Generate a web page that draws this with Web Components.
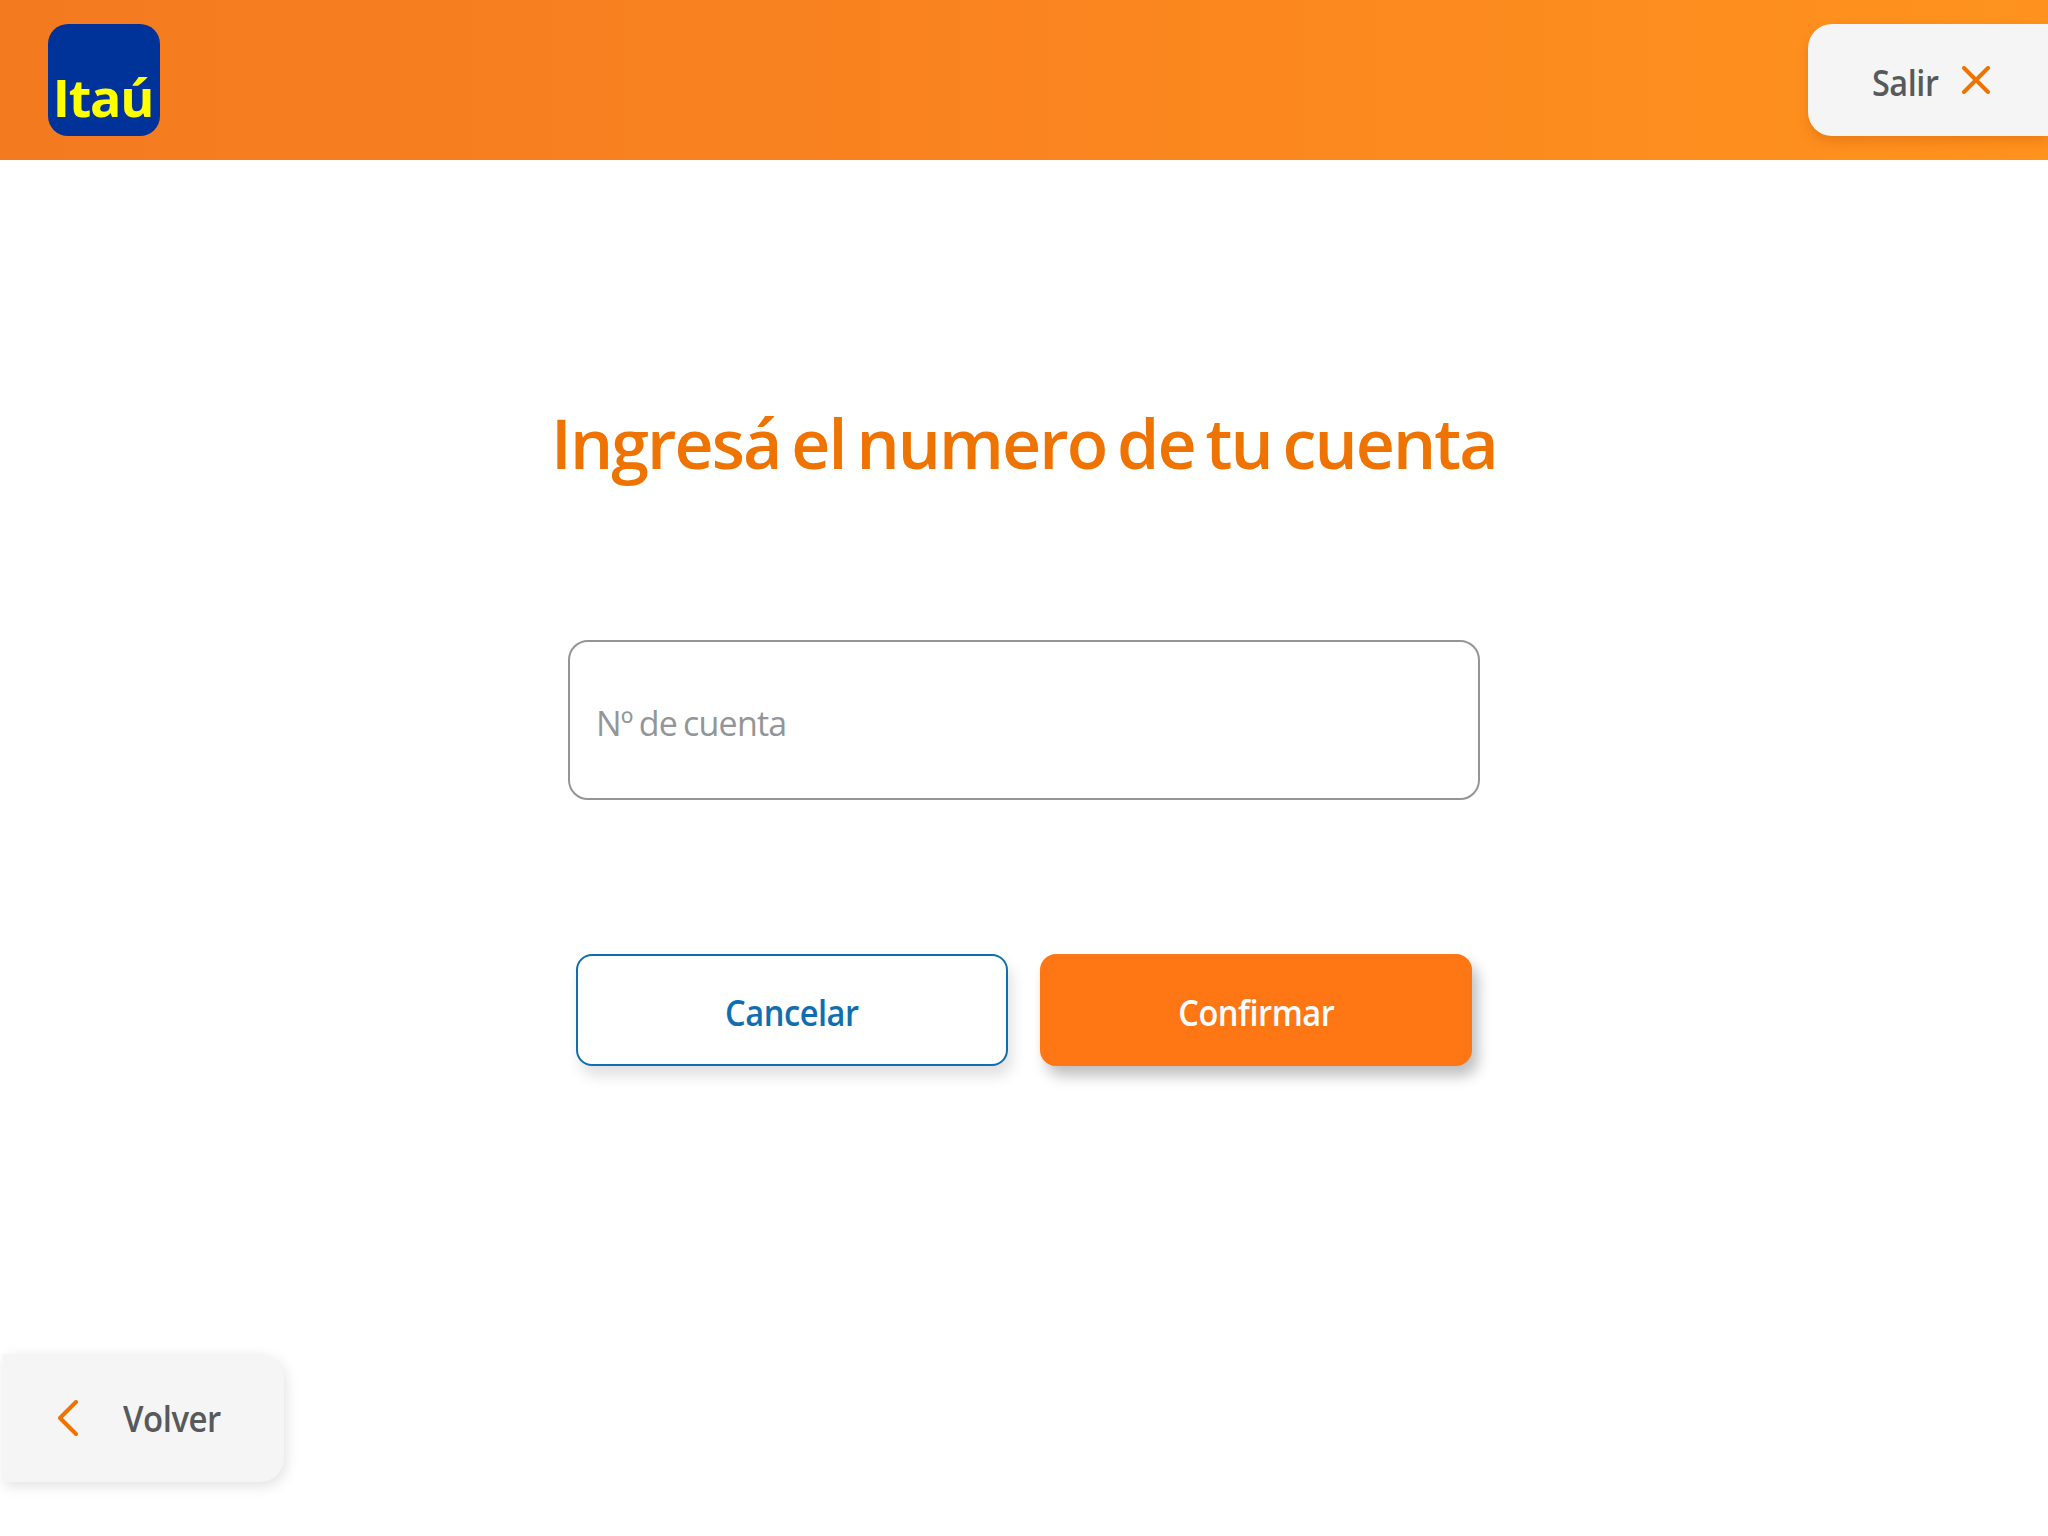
<!DOCTYPE html>
<html lang="es">
<head>
<meta charset="utf-8">
<title>Itaú</title>
<style>
  html, body { margin: 0; height: 100%; background: #fff; }
  body { font-family: "Open Sans", "Noto Sans", sans-serif; }
</style>
</head>
<body>
<account-page>
  <app-header slot="header"></app-header>
  <h-title slot="title">Ingresá el numero de tu cuenta</h-title>
  <account-input slot="field" placeholder="Nº de cuenta"></account-input>
  <action-button slot="actions" kind="outline">Cancelar</action-button>
  <action-button slot="actions" kind="solid">Confirmar</action-button>
  <back-button slot="footer">Volver</back-button>
</account-page>

<script>
class AccountPage extends HTMLElement {
  constructor() {
    super();
    this.shadowDOM = this.attachShadow({ mode: "open" });
    this.shadowDOM.innerHTML = `
      <style>
        :host { display: flex; flex-direction: column; height: 1536px; overflow: hidden; }
        main { flex: 1; display: flex; flex-direction: column; align-items: center; padding-top: 239px; }
        .field { margin-top: 153px; }
        .actions { margin-top: 154px; display: flex; gap: 32px; }
        footer { padding: 0 0 54px 3px; }
      </style>
      <slot name="header"></slot>
      <main>
        <slot name="title"></slot>
        <div class="field"><slot name="field"></slot></div>
        <div class="actions"><slot name="actions"></slot></div>
      </main>
      <footer><slot name="footer"></slot></footer>`;
  }
}

class AppHeader extends HTMLElement {
  constructor() {
    super();
    this.shadowDOM = this.attachShadow({ mode: "open" });
    this.shadowDOM.innerHTML = `
      <style>
        :host { display: flex; align-items: center; justify-content: space-between; height: 160px; padding-left: 48px;
          background: linear-gradient(90deg, #f47a20, #fa841f 50%, #ff931e); }
        .logo { width: 112px; height: 112px; box-sizing: border-box; border-radius: 20px; background: #003399; color: #ffff00;
          display: flex; align-items: flex-end; justify-content: center; font-weight: 700; font-size: 52px; line-height: 56px;
          padding: 0 2px 11px 0; letter-spacing: -1.2px; }
        .exit { width: 240px; height: 112px; box-sizing: border-box; border-radius: 24px 0 0 24px; background: #f5f5f5;
          box-shadow: 0 6px 12px rgba(200, 90, 0, .35); display: flex; align-items: center; padding-left: 64px; gap: 24px;
          color: #58595b; font-size: 36px; font-weight: 600; letter-spacing: -.5px; }
        .exit span { display: block; width: 66px; padding-top: 5px; white-space: nowrap; transform: scaleX(.9); transform-origin: left; }
        svg { display: block; }
      </style>
      <div class="logo">Itaú</div>
      <div class="exit">
        <span>Salir</span>
        <svg width="28" height="28" viewBox="0 0 28 28" fill="none" stroke="#ef7300" stroke-width="4" stroke-linecap="round"><path d="M2 2 26 26M26 2 2 26"/></svg>
      </div>`;
  }
}

class HTitle extends HTMLElement {
  constructor() {
    super();
    this.shadowDOM = this.attachShadow({ mode: "open" });
    this.shadowDOM.innerHTML = `
      <style>
        :host { display: block; color: #ef7300; font-size: 68px; font-weight: 600; line-height: 88px; letter-spacing: -1.9px; word-spacing: -5px; white-space: nowrap; }
      </style>
      <slot></slot>`;
  }
}

class AccountInput extends HTMLElement {
  constructor() {
    super();
    this.shadowDOM = this.attachShadow({ mode: "open" });
    this.shadowDOM.innerHTML = `
      <style>
        :host { display: flex; align-items: center; width: 912px; height: 160px; box-sizing: border-box; border: 2px solid #939598;
          border-radius: 20px; padding: 6px 0 0 26px; color: #939598; font-size: 34px; letter-spacing: -.8px; word-spacing: -2px; }
      </style>
      <span>${this.getAttribute("placeholder")}</span>`;
  }
}

class ActionButton extends HTMLElement {
  constructor() {
    super();
    this.shadowDOM = this.attachShadow({ mode: "open" });
    this.shadowDOM.innerHTML = `
      <style>
        :host { display: flex; align-items: center; justify-content: center; width: 432px; height: 112px; box-sizing: border-box;
          border-radius: 16px; font-size: 36px; font-weight: 600; letter-spacing: -.5px; padding-top: 4px; }
        :host([kind="outline"]) { background: #fff; color: #106eb0; border: 2px solid #106eb0; box-shadow: 4px 10px 14px rgba(0,0,0,.12); }
        :host([kind="solid"]) { background: #ff7614; color: #fff; box-shadow: 6px 10px 14px rgba(0,0,0,.25); }
        span { display: block; transform: scaleX(.905); }
      </style>
      <span><slot></slot></span>`;
  }
}

class BackButton extends HTMLElement {
  constructor() {
    super();
    this.shadowDOM = this.attachShadow({ mode: "open" });
    this.shadowDOM.innerHTML = `
      <style>
        :host { display: flex; align-items: center; width: 281px; height: 128px; box-sizing: border-box; padding-left: 55px; gap: 45px;
          background: #f5f5f5; border-radius: 0 24px 24px 0; box-shadow: 2px 4px 14px rgba(0,0,0,.12);
          color: #58595b; font-size: 36px; font-weight: 600; letter-spacing: -.5px; }
        span { display: block; transform: scaleX(.915); transform-origin: left; }
        svg { display: block; }
      </style>
      <svg width="20" height="36" viewBox="0 0 20 36" fill="none" stroke="#ef7300" stroke-width="4" stroke-linecap="round" stroke-linejoin="round"><path d="M18 2 2 18 18 34"/></svg>
      <span><slot></slot></span>`;
  }
}

customElements.define("account-page", AccountPage);
customElements.define("app-header", AppHeader);
customElements.define("h-title", HTitle);
customElements.define("account-input", AccountInput);
customElements.define("action-button", ActionButton);
customElements.define("back-button", BackButton);
</script>
</body>
</html>
